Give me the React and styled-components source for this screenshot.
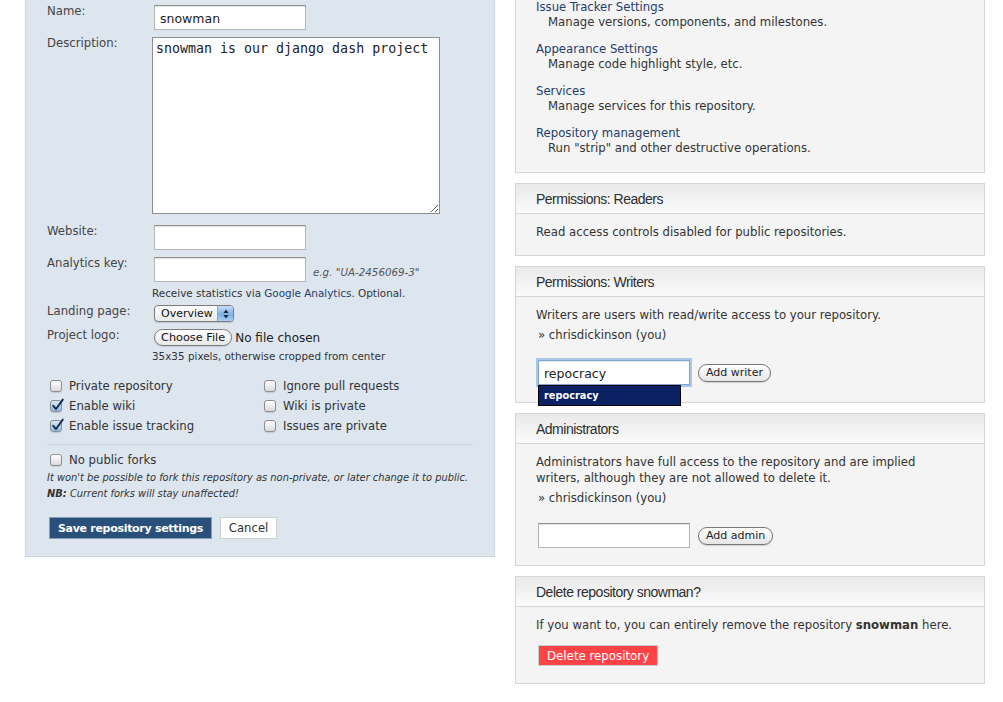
import React from "react";
import styled, { createGlobalStyle } from "styled-components";

const GlobalStyle = createGlobalStyle`
  body {
    margin: 0;
    background: #fff;
    font-family: "DejaVu Sans", Verdana, sans-serif;
    font-size: 11.7px;
    color: #333;
  }
`;

const Page = styled.div`
  display: flex;
  align-items: flex-start;
  gap: 20px;
  padding-left: 25px;
`;

/* ---------- left: settings form ---------- */

const SettingsForm = styled.form`
  width: 470px;
  box-sizing: border-box;
  background: #dde6ef;
  border: 1px solid #cbd5df;
  border-top: none;
  padding: 5px 21px 17px;
`;

const FieldRow = styled.div`
  display: grid;
  grid-template-columns: 105px 1fr;
  align-items: start;
  margin-bottom: ${(props) => props.$gap || 0}px;
`;

const FieldLabel = styled.label`
  line-height: 12px;
  color: #444;
`;

const FieldBody = styled.div`
  display: flex;
  align-items: center;
  gap: 7px;
  padding-left: ${(props) => (props.$flush ? 0 : 2)}px;
`;

const TextInput = styled.input`
  width: ${(props) => props.$width || 152}px;
  height: 25px;
  box-sizing: border-box;
  border: 1px solid #b5b5b5;
  border-top-color: #8f8f8f;
  box-shadow: inset 0 1px 1px rgba(0, 0, 0, 0.12);
  background: #fff;
  padding: 2px 5px 0;
  font-family: "DejaVu Sans", Verdana, sans-serif;
  font-size: 12.5px;
  color: #222;
  outline: none;
  ${(props) =>
    props.$focused &&
    `
    border-color: #7ea6d3;
    box-shadow: 0 0 0 2px #a9c8ea, inset 0 1px 1px rgba(0,0,0,0.1);
  `}
`;

const DescriptionArea = styled.textarea`
  display: block;
  width: 288px;
  height: 177px;
  box-sizing: border-box;
  border: 1px solid #8e8e8e;
  background: #fff;
  padding: 3px 3px;
  font-family: "DejaVu Sans Mono", "Liberation Mono", monospace;
  font-size: 13.3px;
  line-height: 16px;
  color: #222;
  resize: both;
  outline: none;
`;

const Hint = styled.span`
  font-style: italic;
  font-size: 10.3px;
  color: #555;
  padding-top: 4px;
`;

const HelpText = styled.div`
  font-size: 10.4px;
  line-height: 14px;
  color: #333;
  margin-bottom: ${(props) => props.$gap || 0}px;
  a {
    color: #1f3d6b;
    text-decoration: none;
  }
`;

const SelectBox = styled.div`
  display: flex;
  width: 80px;
  height: 17px;
  box-sizing: border-box;
  border: 1px solid #7c7c7c;
  border-radius: 4px;
  overflow: hidden;
  background: linear-gradient(#ffffff, #e9e9e9);
  box-shadow: 0 1px 1px rgba(0, 0, 0, 0.15);
`;

const SelectValue = styled.span`
  flex: 1;
  padding-left: 6px;
  line-height: 15px;
  font-size: 11px;
  color: #111;
`;

const SelectArrows = styled.span`
  width: 15px;
  display: flex;
  align-items: center;
  justify-content: center;
  border-left: 1px solid #8aa6c8;
  background: linear-gradient(#c9def5, #7fb0e6 55%, #a9cdf2);
`;

const FileButton = styled.span`
  display: inline-block;
  height: 17px;
  box-sizing: border-box;
  padding: 0 6px;
  border: 1px solid #7a7a7a;
  border-radius: 9px;
  background: linear-gradient(#ffffff, #e8e8e8);
  line-height: 15px;
  font-size: 11.3px;
  color: #111;
  box-shadow: 0 1px 1px rgba(0, 0, 0, 0.12);
`;

const FileStatus = styled.span`
  font-size: 12px;
  color: #222;
  margin-left: -4px;
`;

const CheckGrid = styled.div`
  display: grid;
  grid-template-columns: 214px 1fr;
  grid-auto-rows: 20px;
  margin-top: ${(props) => props.$top || 0}px;
`;

const CheckItem = styled.label`
  display: flex;
  align-items: center;
  gap: 7px;
  padding-left: 3px;
  font-size: 11.7px;
  color: #333;
  height: 20px;
`;

const CheckBox = styled.span`
  position: relative;
  width: 12px;
  height: 12px;
  box-sizing: border-box;
  border: 1px solid #8c8c8c;
  border-radius: 3px;
  background: ${(props) =>
    props.$checked
      ? "linear-gradient(#d9e9f9, #8dbbe9)"
      : "linear-gradient(#ffffff, #dcdcdc)"};
  box-shadow: 0 1px 1px rgba(0, 0, 0, 0.12);
  flex-shrink: 0;
`;

const CheckTick = styled.svg`
  position: absolute;
  left: 0px;
  top: -3px;
`;

const Separator = styled.hr`
  border: none;
  border-top: 1px solid #c8d2dc;
  margin: 8px 0 5px;
`;

const Note = styled.p`
  margin: 0;
  font-style: italic;
  font-size: 9.9px;
  line-height: 16px;
  color: #333;
`;

const Actions = styled.div`
  display: flex;
  gap: 8px;
  margin-top: 15px;
  padding-left: 2px;
`;

const SaveButton = styled.button`
  height: 22px;
  padding: 0 8px;
  border: 1px solid #8a9db3;
  background: #29507a;
  color: #fff;
  font-family: "DejaVu Sans", Verdana, sans-serif;
  font-weight: bold;
  font-size: 11px;
  letter-spacing: -0.3px;
`;

const CancelButton = styled.button`
  height: 22px;
  width: 57px;
  padding: 0;
  border: 1px solid #cfcfcf;
  background: #fff;
  color: #333;
  font-family: "DejaVu Sans", Verdana, sans-serif;
  font-size: 11.7px;
`;

/* ---------- right: sidebar boxes ---------- */

const Sidebar = styled.div`
  width: 470px;
  display: flex;
  flex-direction: column;
  gap: 10px;
`;

const Box = styled.section`
  background: #f4f4f4;
  border: 1px solid #d6d6d6;
  ${(props) => props.$cut && "border-top: none;"}
`;

const BoxHeader = styled.h3`
  margin: 0;
  height: 29px;
  line-height: 30px;
  padding-left: 20px;
  border-bottom: 1px solid #d6d6d6;
  background: linear-gradient(#e9e9e9, #fbfbfb);
  font-family: "Liberation Sans", Arial, sans-serif;
  font-weight: normal;
  font-size: 14px;
  letter-spacing: -0.5px;
  color: #2e2e2e;
`;

const BoxBody = styled.div`
  padding: ${(props) => (props.$cut ? 0 : 10)}px 20px
    ${(props) => props.$bottom ?? 17}px;
`;

const LinkItem = styled.div`
  line-height: 15px;
  margin-bottom: 12px;
  &:last-child {
    margin-bottom: 0;
  }
`;

const LinkTitle = styled.a`
  display: block;
  color: #1f3d6b;
  text-decoration: none;
`;

const LinkDesc = styled.div`
  padding-left: 12px;
  color: #333;
`;

const Text = styled.p`
  margin: 0;
  line-height: 16px;
  color: #333;
`;

const UserLine = styled.div`
  margin-top: 4px;
  line-height: 16px;
  color: #333;
  padding-left: 2px;
`;

const InlineForm = styled.div`
  display: flex;
  align-items: center;
  gap: 8px;
  margin-top: 17px;
  padding-left: 2px;
`;

const InputWrap = styled.div`
  position: relative;
`;

const Autocomplete = styled.div`
  position: absolute;
  left: 0;
  top: 100%;
  width: 143px;
  height: 21px;
  box-sizing: border-box;
  background: #0b2163;
  border: 1px solid #000;
  padding-left: 5px;
  line-height: 19px;
  font-weight: bold;
  font-size: 9.8px;
  color: #fff;
  z-index: 2;
`;

const PillButton = styled.button`
  height: 18px;
  padding: 0 7px;
  border: 1px solid #767676;
  border-radius: 9px;
  background: linear-gradient(#ffffff, #e6e6e6);
  box-shadow: 0 1px 1px rgba(0, 0, 0, 0.15);
  font-family: "DejaVu Sans", Verdana, sans-serif;
  font-size: 11px;
  color: #222;
  line-height: 16px;
`;

const DeleteButton = styled.button`
  margin: 12px 0 0 2px;
  height: 21px;
  padding: 0 8px;
  border: 1px solid #cdcdcd;
  background: #ff4246;
  color: #fff;
  font-family: "DejaVu Sans", Verdana, sans-serif;
  font-size: 11.8px;
`;

const managementLinks = [
  ["Issue Tracker Settings", "Manage versions, components, and milestones."],
  ["Appearance Settings", "Manage code highlight style, etc."],
  ["Services", "Manage services for this repository."],
  ["Repository management", 'Run "strip" and other destructive operations.'],
];

const checkOptions = [
  ["Private repository", false],
  ["Ignore pull requests", false],
  ["Enable wiki", true],
  ["Wiki is private", false],
  ["Enable issue tracking", true],
  ["Issues are private", false],
];

function Check({ label, checked }) {
  return (
    <CheckItem>
      <CheckBox $checked={checked}>
        {checked && (
          <CheckTick width="14" height="14" viewBox="0 0 14 14">
            <path
              d="M2.2 7.8 L5 11 L11.8 1.6"
              fill="none"
              stroke="#1b2c48"
              strokeWidth="1.9"
              strokeLinecap="round"
              strokeLinejoin="round"
            />
          </CheckTick>
        )}
      </CheckBox>
      {label}
    </CheckItem>
  );
}

function RepositoryForm() {
  return (
    <SettingsForm onSubmit={(e) => e.preventDefault()}>
      <FieldRow $gap={7}>
        <FieldLabel>Name:</FieldLabel>
        <FieldBody>
          <TextInput defaultValue="snowman" />
        </FieldBody>
      </FieldRow>
      <FieldRow $gap={11}>
        <FieldLabel>Description:</FieldLabel>
        <FieldBody $flush>
          <DescriptionArea defaultValue="snowman is our django dash project" />
        </FieldBody>
      </FieldRow>
      <FieldRow $gap={7}>
        <FieldLabel>Website:</FieldLabel>
        <FieldBody>
          <TextInput />
        </FieldBody>
      </FieldRow>
      <FieldRow $gap={4}>
        <FieldLabel>Analytics key:</FieldLabel>
        <FieldBody>
          <TextInput />
          <Hint>e.g. "UA-2456069-3"</Hint>
        </FieldBody>
      </FieldRow>
      <FieldRow>
        <span />
        <HelpText $gap={5}>
          Receive statistics via <a href="#ga">Google Analytics</a>. Optional.
        </HelpText>
      </FieldRow>
      <FieldRow $gap={7}>
        <FieldLabel>Landing page:</FieldLabel>
        <FieldBody>
          <SelectBox>
            <SelectValue>Overview</SelectValue>
            <SelectArrows>
              <svg width="6" height="10" viewBox="0 0 6 10">
                <path d="M3 0.5 L5.6 4 L0.4 4 Z" fill="#1c2a3a" />
                <path d="M3 9.5 L5.6 6 L0.4 6 Z" fill="#1c2a3a" />
              </svg>
            </SelectArrows>
          </SelectBox>
        </FieldBody>
      </FieldRow>
      <FieldRow $gap={3}>
        <FieldLabel>Project logo:</FieldLabel>
        <FieldBody>
          <FileButton>Choose File</FileButton>
          <FileStatus>No file chosen</FileStatus>
        </FieldBody>
      </FieldRow>
      <FieldRow>
        <span />
        <HelpText>35x35 pixels, otherwise cropped from center</HelpText>
      </FieldRow>

      <CheckGrid $top={13}>
        {checkOptions.map(([label, checked]) => (
          <Check key={label} label={label} checked={checked} />
        ))}
      </CheckGrid>
      <Separator />
      <Check label="No public forks" checked={false} />
      <Note>
        It won't be possible to fork this repository as non-private, or later
        change it to public.
      </Note>
      <Note>
        <b>NB:</b> Current forks will stay unaffected!
      </Note>

      <Actions>
        <SaveButton type="submit">Save repository settings</SaveButton>
        <CancelButton type="button">Cancel</CancelButton>
      </Actions>
    </SettingsForm>
  );
}

function RepositorySidebar() {
  return (
    <Sidebar>
      <Box $cut>
        <BoxBody $cut $bottom={16}>
          {managementLinks.map(([title, desc]) => (
            <LinkItem key={title}>
              <LinkTitle href="#">{title}</LinkTitle>
              <LinkDesc>{desc}</LinkDesc>
            </LinkItem>
          ))}
        </BoxBody>
      </Box>

      <Box>
        <BoxHeader>Permissions: Readers</BoxHeader>
        <BoxBody $bottom={15}>
          <Text>Read access controls disabled for public repositories.</Text>
        </BoxBody>
      </Box>

      <Box>
        <BoxHeader>Permissions: Writers</BoxHeader>
        <BoxBody>
          <Text>Writers are users with read/write access to your repository.</Text>
          <UserLine>» chrisdickinson (you)</UserLine>
          <InlineForm>
            <InputWrap>
              <TextInput $focused defaultValue="repocracy" />
              <Autocomplete>repocracy</Autocomplete>
            </InputWrap>
            <PillButton>Add writer</PillButton>
          </InlineForm>
        </BoxBody>
      </Box>

      <Box>
        <BoxHeader>Administrators</BoxHeader>
        <BoxBody>
          <Text>
            Administrators have full access to the repository and are implied
            <br />
            writers, although they are not allowed to delete it.
          </Text>
          <UserLine>» chrisdickinson (you)</UserLine>
          <InlineForm>
            <TextInput />
            <PillButton>Add admin</PillButton>
          </InlineForm>
        </BoxBody>
      </Box>

      <Box>
        <BoxHeader>Delete repository snowman?</BoxHeader>
        <BoxBody>
          <Text>
            If you want to, you can entirely remove the repository{" "}
            <b>snowman</b> here.
          </Text>
          <DeleteButton>Delete repository</DeleteButton>
        </BoxBody>
      </Box>
    </Sidebar>
  );
}

export default function App() {
  return (
    <>
      <GlobalStyle />
      <Page>
        <RepositoryForm />
        <RepositorySidebar />
      </Page>
    </>
  );
}
